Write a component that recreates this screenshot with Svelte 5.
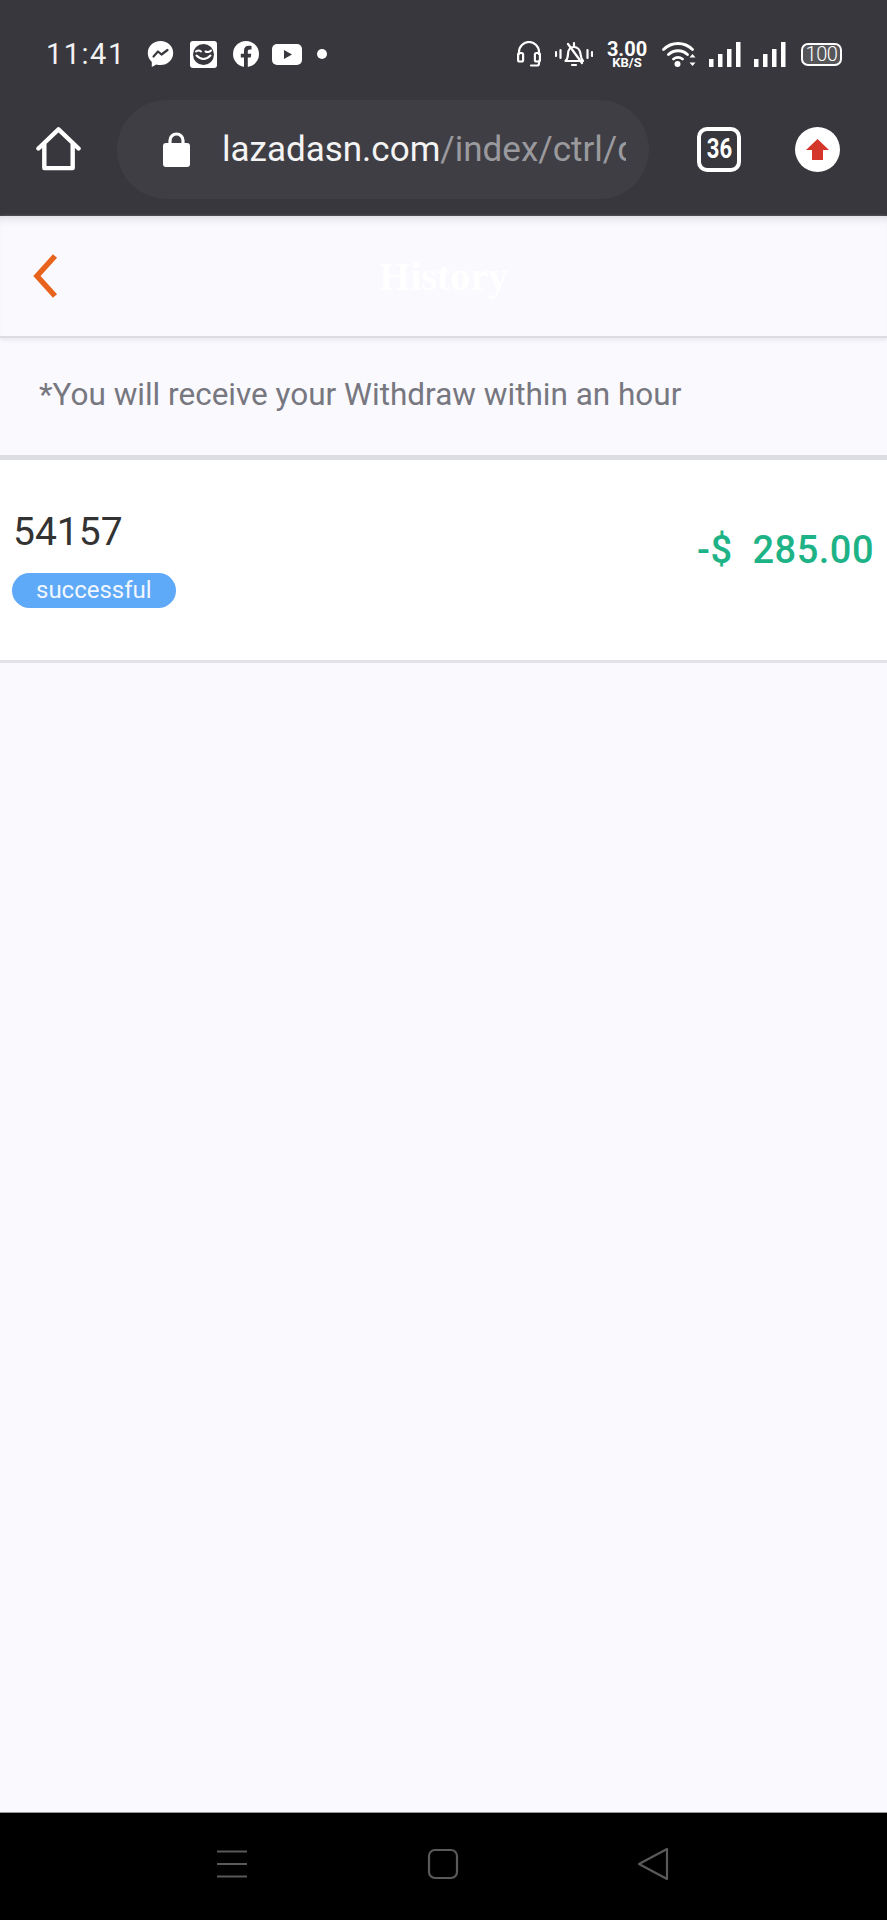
<script>
  const bars = [
    { x: 1, y: 17, h: 8 },
    { x: 10, y: 12, h: 13 },
    { x: 19, y: 7, h: 18 },
    { x: 28, y: 0, h: 25 }
  ];
</script>

<div class="page">
  <div class="chrome">
    <div class="status">
      <span class="time">11:41</span>
      <div class="apps">
        <svg class="messenger" width="27" height="28" viewBox="0 0 27 28">
          <path fill="#fff" d="M13.5 1C6.3 1 .8 6.200 .8 13c0 3.600 1.500 6.700 4 8.900V27l4.500-2.500c1.300.4 2.700.6 4.200.6 7.200 0 12.700-5.300 12.700-12.100S20.700 1 13.500 1z" />
          <path fill="none" stroke="#38373d" stroke-width="2.200" stroke-linejoin="round" stroke-linecap="round" d="M6.500 16.500l4.500-5 3.500 3 6-4.500" />
        </svg>
        <svg class="smiley" width="27" height="27" viewBox="0 0 27 27">
          <rect width="27" height="27" rx="3" fill="#fff" />
          <circle cx="13.500" cy="13.500" r="10.500" fill="#38373d" />
          <path fill="none" stroke="#fff" stroke-width="2" stroke-linecap="round" d="M6 10.500q2.500-1.800 5 0M15.500 10.500q3 1.500 5.500-1M6.500 14.500q7 7 14 0" />
        </svg>
        <svg class="facebook" width="26" height="26" viewBox="0 0 26 26">
          <circle cx="13" cy="13" r="13" fill="#fff" />
          <path fill="#38373d" d="M11 26V16.500H7.800v-3.800H11v-2.900c0-3.200 1.900-5 4.800-5 1 0 2 .1 2.700.3v3.300h-1.700c-1.500 0-2 .9-2 1.900v2.400h3.500l-.6 3.800h-2.900V26z" />
        </svg>
        <svg class="youtube" width="30" height="21" viewBox="0 0 30 21">
          <rect width="30" height="21" rx="5" fill="#fff" />
          <path fill="#38373d" d="M12 6l8 4.500-8 4.500z" />
        </svg>
        <span class="dot"></span>
      </div>

      <div class="system">
        <svg class="headset" width="24" height="26" viewBox="0 0 24 26">
          <path fill="none" stroke="#fff" stroke-width="2.200" d="M2 14V11a10 10 0 0 1 20 0v3" />
          <rect x="1.100" y="12" width="5" height="8.500" rx="1.500" fill="none" stroke="#fff" stroke-width="2.200" />
          <rect x="17.900" y="12" width="5" height="8.500" rx="1.500" fill="none" stroke="#fff" stroke-width="2.200" />
          <path fill="none" stroke="#fff" stroke-width="2.200" stroke-linecap="round" d="M22 20v2.500a2 2 0 0 1-2 2h-6" />
        </svg>
        <svg class="bell" width="38" height="26" viewBox="0 0 38 26">
          <path fill="none" stroke="#fff" stroke-width="2.200" stroke-linejoin="round" d="M10.500 20c2-2 2.500-4 2.500-7 0-4 2.500-7 6-7s6 3 6.500 7c.3 3 1 5 2.500 7z" />
          <path fill="none" stroke="#fff" stroke-width="2.200" stroke-linecap="round" d="M13 3l14 19M17 24h4M19 2v3M1 11v4M5.500 9v8M32.500 9v8M37 11v4" />
        </svg>
        <div class="speed">
          <span class="speed-value">3.00</span>
          <span class="speed-unit">KB/S</span>
        </div>
        <svg class="wifi" width="34" height="26" viewBox="0 0 34 26">
          <path fill="none" stroke="#fff" stroke-width="2.800" stroke-linecap="round" d="M1.500 8.500c8-8 21-8 29 0M6.500 13.500c5.500-5 13.500-5 19 0M11.500 18c2.700-2 6.300-2 9 0" />
          <circle cx="15.500" cy="23" r="3" fill="#fff" />
          <path fill="#fff" d="M30.500 13l3 3.500h-6zM30.500 25l3-3.500h-6z" />
        </svg>
        {#each [0, 1] as sim (sim)}
          <svg class="signal" width="33" height="25" viewBox="0 0 33 25">
            {#each bars as bar (bar.x)}
              <rect x={bar.x} y={bar.y} width="4.500" height={bar.h} fill="#fff" />
            {/each}
          </svg>
        {/each}
        <div class="battery"><span>100</span></div>
      </div>
    </div>

    <div class="toolbar">
      <svg class="home" width="46" height="46" viewBox="0 0 46 46">
        <path fill="none" stroke="#fff" stroke-width="4.500" stroke-linejoin="round" stroke-linecap="round" d="M2.500 22.500L23 3l20.500 19.500M8.500 18v24.500h29V18" />
      </svg>
      <div class="address">
        <svg class="lock" width="27" height="35" viewBox="0 0 27 35">
          <path fill="none" stroke="#fff" stroke-width="3.200" d="M7 14V8.500a6.500 6.500 0 0 1 13 0V14" />
          <rect y="11" width="27" height="24" rx="3" fill="#fff" />
        </svg>
        <span class="url"><b>lazadasn.com</b>/index/ctrl/qr</span>
      </div>
      <div class="tabs"><span>36</span></div>
      <div class="upload">
        <svg width="23" height="21" viewBox="0 0 23 21">
          <path fill="#d4362a" d="M11.500 0L23 11h-6v10H6V11H0z" />
        </svg>
      </div>
    </div>
  </div>

  <header class="head">
    <svg class="back" width="25" height="44" viewBox="0 0 25 44">
      <path fill="none" stroke="#e8641c" stroke-width="5.500" d="M22 2L4 22l18 20" />
    </svg>
    <h1>History</h1>
  </header>

  <p class="note">*You will receive your Withdraw within an hour</p>

  <div class="record">
    <div class="record-left">
      <span class="order">54157</span>
      <span class="badge">successful</span>
    </div>
    <span class="amount">-$&nbsp;&nbsp;285.00</span>
  </div>

  <div class="rest"></div>

  <nav class="nav">
    <svg width="32" height="28" viewBox="0 0 32 28">
      <path fill="none" stroke="#5a5a5a" stroke-width="2" d="M1 1.500h30M1 14h30M1 26.500h30" />
    </svg>
    <svg width="32" height="32" viewBox="0 0 32 32">
      <rect x="2" y="2" width="28" height="28" rx="6" fill="none" stroke="#5a5a5a" stroke-width="2.200" />
    </svg>
    <svg width="32" height="34" viewBox="0 0 32 34">
      <path fill="none" stroke="#5a5a5a" stroke-width="2.200" stroke-linejoin="round" d="M30 2v30L2 17z" />
    </svg>
  </nav>
</div>

<style>
  :global(body) {
    margin: 0;
    background: #f9f9fe;
  }

  .page {
    display: flex;
    flex-direction: column;
    width: 887px;
    height: 1920px;
    overflow: hidden;
    font-family: Roboto, "Liberation Sans", sans-serif;
    background: #f9f9fe;
  }

  .chrome {
    display: flex;
    flex-direction: column;
    height: 216px;
    background: #38373d;
    flex: none;
  }

  .status {
    display: flex;
    align-items: center;
    height: 68px;
    padding: 40px 45px 0 46px;
    box-sizing: border-box;
    color: #fff;
  }

  .time {
    font-size: 29px;
    letter-spacing: 1.500px;
    color: #f2f2f2;
    margin-right: 21px;
  }

  .apps {
    display: flex;
    align-items: center;
    gap: 13px;
  }

  .messenger {
    margin-right: 3px;
  }

  .smiley {
    margin-right: 3px;
  }

  .dot {
    width: 10px;
    height: 10px;
    border-radius: 50%;
    background: #fff;
    margin-left: 2px;
  }

  .system {
    display: flex;
    align-items: center;
    margin-left: auto;
    gap: 12px;
  }

  .bell {
    margin-left: 2px;
  }

  .speed {
    display: flex;
    flex-direction: column;
    align-items: center;
    font-weight: 700;
    line-height: 1;
    width: 44px;
  }

  .speed-value {
    font-size: 20px;
    height: 17px;
  }

  .speed-unit {
    font-size: 13px;
  }

  .wifi {
    margin-left: 1px;
  }

  .battery {
    display: flex;
    align-items: center;
    justify-content: center;
    width: 41px;
    height: 23px;
    margin-left: 3px;
    box-sizing: border-box;
    border: 2px solid #fff;
    border-radius: 7px;
    font-size: 20px;
    font-weight: 300;
    letter-spacing: -0.500px;
    background: #56555a;
  }

  .toolbar {
    display: flex;
    align-items: center;
    padding: 14px 47px 0 36px;
    flex: 1;
    box-sizing: border-box;
  }

  .address {
    display: flex;
    align-items: center;
    width: 532px;
    height: 99px;
    margin-left: 36px;
    padding: 0 23px 0 46px;
    box-sizing: border-box;
    border-radius: 50px;
    background: #3f3e44;
    flex: none;
  }

  .lock {
    flex: none;
    margin-right: 32px;
  }

  .url {
    font-size: 35px;
    color: #9a9a9e;
    white-space: nowrap;
    overflow: hidden;
  }

  .url b {
    font-weight: 400;
    color: #f4f4f4;
  }

  .tabs {
    display: flex;
    align-items: center;
    justify-content: center;
    width: 44px;
    height: 45px;
    margin-left: 48px;
    box-sizing: border-box;
    border: 4.500px solid #fff;
    border-radius: 10px;
    color: #fff;
    font-size: 27px;
    font-weight: 700;
    flex: none;
  }

  .tabs span {
    transform: scaleX(0.82);
  }

  .upload {
    display: flex;
    align-items: center;
    justify-content: center;
    width: 45px;
    height: 45px;
    margin-left: 54px;
    border-radius: 50%;
    background: #fff;
    flex: none;
  }

  .head {
    display: flex;
    align-items: center;
    position: relative;
    height: 122px;
    padding-left: 33px;
    box-sizing: border-box;
    border-bottom: 2px solid #dcdce2;
    box-shadow: inset 0 8px 8px -6px #d8d8de, 0 2px 4px #e6e6ec;
    flex: none;
  }

  .back {
    margin-top: -1px;
  }

  .head h1 {
    position: absolute;
    left: 0;
    right: 0;
    margin: 0;
    text-align: center;
    font-family: "Liberation Serif", serif;
    font-size: 40px;
    font-weight: 700;
    color: #fff;
  }

  .note {
    display: flex;
    align-items: center;
    height: 117px;
    margin: 0;
    padding: 0 0 5px 39px;
    box-sizing: border-box;
    font-size: 31.500px;
    color: #77777f;
    flex: none;
  }

  .record {
    display: flex;
    align-items: center;
    justify-content: space-between;
    height: 208px;
    padding: 0 13px 0 12px;
    box-sizing: border-box;
    background: #fff;
    border-top: 5px solid #dcdce3;
    border-bottom: 3px solid #e2e2e9;
    flex: none;
  }

  .record-left {
    display: flex;
    flex-direction: column;
    align-items: flex-start;
    gap: 19px;
    margin-bottom: 3px;
  }

  .order {
    margin-left: 1px;
    font-size: 39px;
    line-height: 44px;
    color: #333;
  }

  .badge {
    padding: 0 24px;
    height: 35px;
    line-height: 35px;
    border-radius: 18px;
    background: #5ea9f8;
    color: #f1f7ff;
    font-size: 24px;
  }

  .amount {
    margin-bottom: 21px;
    font-size: 38px;
    font-weight: 500;
    letter-spacing: 0.500px;
    color: #1eb386;
  }

  .rest {
    flex: 1;
  }

  .nav {
    display: flex;
    align-items: center;
    justify-content: space-between;
    height: 108px;
    padding: 0 218px 5px 216px;
    box-sizing: border-box;
    background: #000;
    border-top: 1px solid #999;
    flex: none;
  }
</style>
